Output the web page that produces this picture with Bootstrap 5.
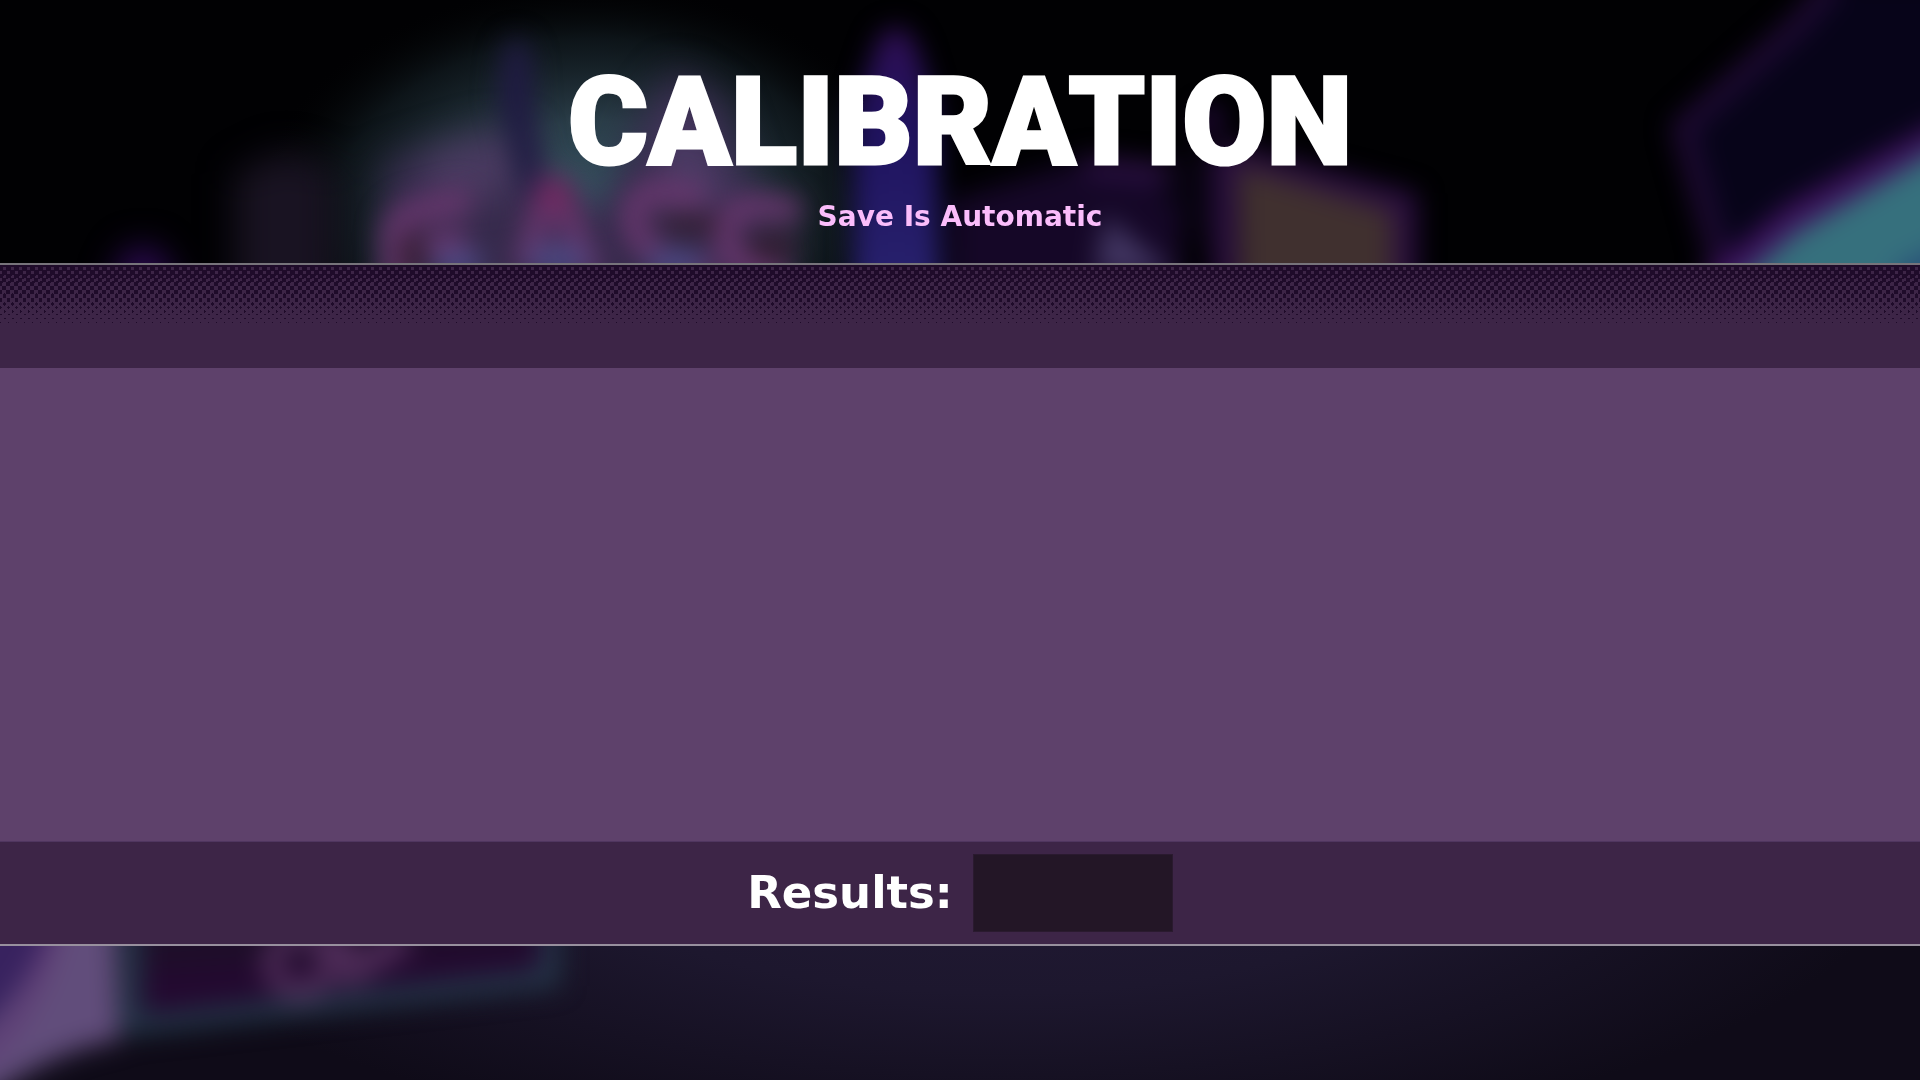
<!DOCTYPE html>
<html lang="en">
<head>
<meta charset="utf-8">
<meta name="viewport" content="width=device-width, initial-scale=1">
<title>Calibration</title>
<link href="https://cdn.jsdelivr.net/npm/bootstrap@5.3.0/dist/css/bootstrap.min.css" rel="stylesheet">
<style>
  body { background: #030307; color: #fff; font-family: "DejaVu Sans", sans-serif; overflow-x: hidden; }
  .backdrop { z-index: -1; }
  .screen-head { padding: 63px 24px 28px; }
  .screen-title { font-family: Roboto, "Liberation Sans", sans-serif; font-weight: 900; font-size: 122px; line-height: 120px; -webkit-text-stroke: 3px #fff; }
  .screen-note { color: #fbbdfb; font-weight: 700; font-size: 28px; line-height: 36px; margin-top: 16px; }
  .panel { background: #3d2547; border-top: 2px solid #77747b; border-bottom: 2px solid #98909e; }
  .halftone { height: 103px; }
  .stage { background: #5e416b; min-height: 474px; border-bottom: 1px solid #503660; }
  .result-bar { padding: 12px 24px; gap: 20px; }
  .result-label { font-weight: 700; font-size: 45px; line-height: 60px; }
  .result-box { width: 200px; height: 78px; background: #231626; border: 1px solid #2a1a2f; border-radius: 0; color: #fff; font-size: 40px; text-align: center; }
  .result-box:focus { outline: 2px solid #fbbdfb; }
</style>
<script src="https://cdn.jsdelivr.net/npm/bootstrap@5.3.0/dist/js/bootstrap.bundle.min.js"></script>
</head>
<body class="min-vh-100 d-flex flex-column">

<svg class="backdrop position-fixed top-0 start-0 w-100 h-100" viewBox="0 0 1920 1080" preserveAspectRatio="xMidYMid slice" aria-hidden="true">
  <defs>
    <filter id="soft" x="-20%" y="-20%" width="140%" height="140%" color-interpolation-filters="sRGB"><feGaussianBlur stdDeviation="13"/></filter>
    <filter id="softer" x="-30%" y="-30%" width="160%" height="160%" color-interpolation-filters="sRGB"><feGaussianBlur stdDeviation="18"/></filter>
    <radialGradient id="teal"><stop offset="0" stop-color="#3a5968"/><stop offset=".4" stop-color="#2a3d48"/><stop offset=".75" stop-color="#10191e" stop-opacity=".8"/><stop offset="1" stop-color="#000" stop-opacity="0"/></radialGradient>
    <radialGradient id="floor" cx=".5" cy=".3" r=".5"><stop offset="0" stop-color="#231a36"/><stop offset=".5" stop-color="#1d172e"/><stop offset="1" stop-color="#0f0b18"/></radialGradient>
    <linearGradient id="spire" x1="0" y1="0" x2="0" y2="1"><stop offset="0" stop-color="#300e54"/><stop offset=".35" stop-color="#1f125e"/><stop offset="1" stop-color="#292470"/></linearGradient>
  </defs>
  <rect width="1920" height="1080" fill="#010103"/>
  <rect y="600" width="1920" height="480" fill="#0f0b18"/>
  <ellipse cx="1000" cy="960" rx="920" ry="330" fill="url(#floor)"/>

  <!-- neon sign glow -->
  <ellipse cx="590" cy="215" rx="340" ry="235" fill="url(#teal)"/>
  <g filter="url(#softer)">
    <path d="M235 300V175l50-25 50 20V300z" fill="#191322"/>
    <path d="M385 300V160l40-10 60-20 40 0 10 50 70 30 40-100 30-40 50 30 30 90 30 40V300z" fill="#362a4c"/>
    <path d="M430 145l90-10v60l-100 10z" fill="#493a60"/>
    <path d="M660 130l20-30 35 50 20 50-80 20z" fill="#4b3b64"/>
    <path d="M130 252l20-5 30 45-70 0z" fill="#380d68"/>
  </g>
  <g filter="url(#soft)">
    <path d="M498 100l5-50 14-15 14 18 4 70 12 90-22-10z" fill="#201b43"/>
    <path d="M878 40q22-30 40 10l18 60 6 200h-90l2-200z" fill="url(#spire)"/>
    <path d="M952 300V200l130-40 100 5 0 140z" fill="#150727"/>
    <path d="M1085 165l95 10 50 100" fill="none" stroke="#2e1147" stroke-width="18"/>
    <path d="M1105 215l70 60h-80z" fill="#413561"/>
    <path d="M1160 185l25-35 35 10v110z" fill="#07030f"/>
    <path d="M1225 145l0 150M1225 155l180 48v110" fill="none" stroke="#2a0e40" stroke-width="24"/>
    <path d="M1238 165l155 46v90H1240z" fill="#40302f"/>
    <path d="M1200 130l18-18" stroke="#2b0b48" stroke-width="20"/>
    <!-- sign lettering -->
    <g fill="none" stroke="#67366d" stroke-width="24">
      <path d="M395 290V250Q388 222 412 212L470 198M420 250l45-12"/>
      <path d="M525 270l22-82h12l32 90"/>
      <path d="M705 198q-75-20-72 20t80 60" />
      <path d="M800 212q-75-18-75 20t60 50"/>
    </g>
    <path d="M538 182h28l10 28h-40z" fill="#70285f"/>
    <path d="M400 240l20-12 10 50-30-4zM655 216l65 0-5 20-45 0zM745 234h50v28h-40z" fill="#321d31"/>
    <path d="M435 250h45v30h-45zM530 245h55v30h-55zM650 250h50v30h-50z" fill="#4a4780"/>
  </g>

  <!-- hexagonal frame and lamp at right -->
  <g filter="url(#soft)">
    <path d="M1840-20L1678 130l52 190h260V-20z" fill="#070419"/>
    <path d="M1835-20L1800 22 1682 128l45 162" fill="none" stroke="#200a36" stroke-width="20"/>
    <path d="M1710 290L1795 218 1950 132" fill="none" stroke="#3c125c" stroke-width="30"/>
    <path d="M1730 290L1795 233 1950 142V340H1700z" fill="#36707d"/>
    <path d="M1895 268l60-30v70h-60z" fill="#285078"/>
  </g>

  <!-- lower sign board -->
  <g filter="url(#soft)">
    <path d="M-30 880H115l5 160Q50 1050-30 1110z" fill="#614d7b"/>
    <path d="M-30 880H60Q45 980-30 1040z" fill="#38225f"/>
    <path d="M60 900Q45 1000-20 1060" fill="none" stroke="#5e3a74" stroke-width="14"/>
    <path d="M132 900V1026L550 978V900z" fill="#230930" stroke="#24384a" stroke-width="18"/>
    <path d="M145 900h380v45l-380 25z" fill="#1e0e29"/>
    <ellipse cx="300" cy="963" rx="28" ry="28" fill="none" stroke="#4d2b57" stroke-width="20"/>
    <path d="M332 930l20 42 55-35" fill="none" stroke="#4d2b57" stroke-width="26"/>
  </g>
</svg>

<header class="screen-head text-center">
  <h1 class="screen-title mb-0">CALIBRATION</h1>
  <p class="screen-note mb-0">Save Is Automatic</p>
</header>

<main class="panel d-flex flex-column">
  <svg class="halftone d-block w-100" aria-hidden="true">
    <defs>
      <pattern id="dots" width="8" height="64" patternUnits="userSpaceOnUse" shape-rendering="crispEdges">
        <path fill="#1f0b2a" d="M0 0h8v25H0z"/>
        <path fill="#3d2547" d="M3 2h3v3H3zM7 6h1v3H7zM0 6h2v3H0zM3 11h3v2H3zM4 10h2v1H4zM6 14h2v3H6zM0 13h2v3H0zM2 18h4v3H2zM3 17h3v1H3zM6 21h2v4H6zM0 21h2v4H0z"/>
        <path fill="#1f0b2a" d="M6 25h2v4H6zM0 25h2v4H0zM3 29h3v4H3zM4 28h1v1H4zM7 33h1v4H7zM0 33h2v4H0zM3 38h3v2H3zM4 37h1v4H4zM7 42h1v1H7zM0 41h1v3H0zM1 42h1v1H1zM4 45h1v3H4zM5 46h1v1H5zM0 49h2v1H0zM4 53h2v1H4zM0 57h1v1H0z"/>
      </pattern>
    </defs>
    <rect width="100%" height="64" fill="url(#dots)"/>
  </svg>
  <section class="stage" aria-label="Calibration track"></section>
  <div class="result-bar d-flex justify-content-center align-items-center">
    <label class="result-label" for="result">Results:</label>
    <input class="result-box" id="result" type="text" readonly>
  </div>
</main>

</body>
</html>
